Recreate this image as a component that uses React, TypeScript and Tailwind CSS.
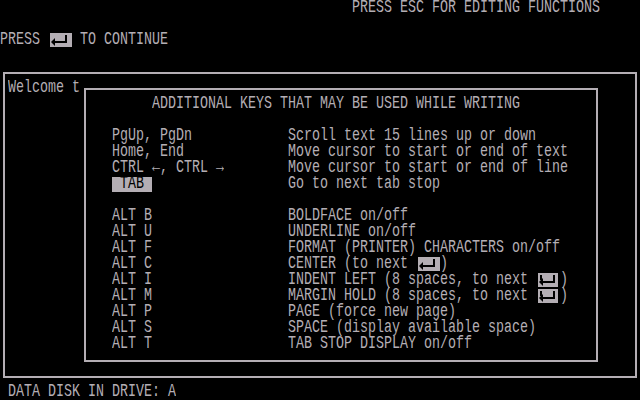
import type { ReactNode } from "react"

const keys: [string, ReactNode][] = [
  ["PgUp, PgDn", "Scroll text 15 lines up or down"],
  ["Home, End", "Move cursor to start or end of text"],
  ["CTRL \u2190, CTRL \u2192", "Move cursor to start or end of line"],
]

function T({ children }: { children: ReactNode }) {
  return <span className="inline-block scale-y-140 whitespace-pre">{children}</span>
}

function Line({ children }: { children?: ReactNode }) {
  return <div className="flex h-4 items-center whitespace-pre">{children}</div>
}

function EnterGlyph({ tab = false }: { tab?: boolean }) {
  return (
    <svg width="24" height="14" viewBox="0 0 24 14" className="shrink-0">
      <rect x="0" y="0" width="24" height="14" fill="#b4aeb4" />
      <rect x="0" y="0" width="2" height="14" fill="#000" />
      <path d="M3 9 L7 5 V13 Z" fill="#000" />
      <rect x="7" y="8" width="12" height="2" fill="#000" />
      <rect x="17" y="2" width="2" height="8" fill="#000" />
      {tab && <rect x="4" y="2" width="2" height="5" fill="#000" />}
      {tab && <rect x="22" y="0" width="2" height="14" fill="#000" />}
    </svg>
  )
}

function KeyRow({ k, children }: { k: ReactNode; children: ReactNode }) {
  return (
    <Line>
      <div className="flex w-[176px] shrink-0">{k}</div>
      {children}
    </Line>
  )
}

export default function App() {
  return (
    <div className="w-[640px] h-[400px] bg-black text-[#b4aeb4] font-['Liberation_Mono',monospace] text-[13.3333px] leading-4 overflow-hidden">
      <Line>
        <span className="w-[352px] shrink-0" />
        <T>PRESS ESC FOR EDITING FUNCTIONS</T>
      </Line>
      <Line />
      <Line>
        <T>PRESS </T>
        <EnterGlyph />
        <T> TO CONTINUE</T>
      </Line>
      <Line />

      <div className="h-[320px] pt-[8px]">
        <div className="ml-[3px] w-[634px] h-[306px] border-2 border-[#b4aeb4] pt-[6px] pl-[3px] flex items-start">
          <div className="w-[72px] shrink-0">
            <Line>
              <T>Welcome t</T>
            </Line>
          </div>
          <div className="ml-[4px] mt-[8px] w-[514px] h-[274px] border-2 border-[#b4aeb4] pt-[6px] pl-[26px]">
            <Line>
              <span className="w-[40px] shrink-0" />
              <T>ADDITIONAL KEYS THAT MAY BE USED WHILE WRITING</T>
            </Line>
            <Line />
            {keys.map(([k, d]) => (
              <KeyRow key={k as string} k={<T>{k}</T>}>
                <T>{d}</T>
              </KeyRow>
            ))}
            <KeyRow
              k={
                <span className="flex h-[15px] w-[40px] items-center bg-[#b4aeb4] text-black">
                  <T> TAB </T>
                </span>
              }
            >
              <T>Go to next tab stop</T>
            </KeyRow>
            <Line />
            <KeyRow k={<T>ALT B</T>}>
              <T>BOLDFACE on/off</T>
            </KeyRow>
            <KeyRow k={<T>ALT U</T>}>
              <T>UNDERLINE on/off</T>
            </KeyRow>
            <KeyRow k={<T>ALT F</T>}>
              <T>FORMAT (PRINTER) CHARACTERS on/off</T>
            </KeyRow>
            <KeyRow k={<T>ALT C</T>}>
              <T>CENTER (to next </T>
              <EnterGlyph />
              <T>)</T>
            </KeyRow>
            <KeyRow k={<T>ALT I</T>}>
              <T>INDENT LEFT (8 spaces, to next </T>
              <EnterGlyph tab />
              <T>)</T>
            </KeyRow>
            <KeyRow k={<T>ALT M</T>}>
              <T>MARGIN HOLD (8 spaces, to next </T>
              <EnterGlyph tab />
              <T>)</T>
            </KeyRow>
            <KeyRow k={<T>ALT P</T>}>
              <T>PAGE (force new page)</T>
            </KeyRow>
            <KeyRow k={<T>ALT S</T>}>
              <T>SPACE (display available space)</T>
            </KeyRow>
            <KeyRow k={<T>ALT T</T>}>
              <T>TAB STOP DISPLAY on/off</T>
            </KeyRow>
          </div>
        </div>
      </div>

      <Line>
        <span className="w-[8px] shrink-0" />
        <T>DATA DISK IN DRIVE: A</T>
      </Line>
    </div>
  )
}
